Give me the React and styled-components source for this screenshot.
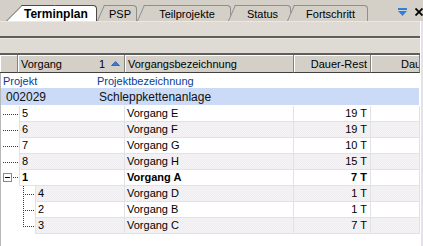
import React from "react";
import styled, { createGlobalStyle } from "styled-components";

const GlobalStyle = createGlobalStyle`
  html, body {
    margin: 0;
    padding: 0;
    background: #ffffff;
  }
  body {
    font-family: "Liberation Sans", Arial, sans-serif;
    font-size: 11px;
    color: #000;
  }
`;

const tabs = [
  { label: "Terminplan", active: true, ml: 16, slant: 16, w: 75 },
  { label: "PSP", ml: 7, slant: 7, w: 33 },
  { label: "Teilprojekte", ml: 7, slant: 7, w: 87 },
  { label: "Status", ml: 4, slant: 7, w: 56 },
  { label: "Fortschritt", ml: 3, slant: 7, w: 74 },
];

const rows = [
  { nr: "5", name: "Vorgang E", dur: "19 T", kind: "leaf" },
  { nr: "6", name: "Vorgang F", dur: "19 T", kind: "leaf" },
  { nr: "7", name: "Vorgang G", dur: "10 T", kind: "leaf" },
  { nr: "8", name: "Vorgang H", dur: "15 T", kind: "leaf" },
  { nr: "1", name: "Vorgang A", dur: "7 T", kind: "open", bold: true },
  { nr: "4", name: "Vorgang D", dur: "1 T", kind: "child" },
  { nr: "2", name: "Vorgang B", dur: "1 T", kind: "child" },
  { nr: "3", name: "Vorgang C", dur: "7 T", kind: "last" },
];

const Panel = styled.div`
  width: 423px;
  height: 246px;
  overflow: hidden;
  background: #d4d0c8;
  display: flex;
  flex-direction: column;
`;

const TabStrip = styled.div`
  height: 21px;
  flex-shrink: 0;
  display: flex;
  align-items: flex-end;
  padding-left: 6px;
`;

const Tab = styled.div`
  position: relative;
  z-index: ${(p) => (p.$active ? 20 : p.$z)};
  box-sizing: border-box;
  width: ${(p) => p.$w}px;
  height: 16px;
  margin-left: ${(p) => p.$ml}px;
  background: ${(p) => (p.$active ? "#ffffff" : "#d4d0c8")};
  border-top: 1px solid ${(p) => (p.$active ? "#4a4a4a" : "#8e8e8e")};
  border-right: 1px solid ${(p) => (p.$active ? "#4a4a4a" : "#8e8e8e")};
  border-top-right-radius: 4px;
  display: flex;
  align-items: center;
  justify-content: ${(p) => (p.$active ? "flex-start" : "center")};
  padding-left: ${(p) => (p.$active ? 2 : 0)}px;
  font-size: ${(p) => (p.$active ? 12 : 11)}px;
  font-weight: ${(p) => (p.$active ? "bold" : "normal")};
  white-space: nowrap;

  &::before {
    content: "";
    position: absolute;
    top: -1px;
    bottom: 0;
    left: -${(p) => p.$slant}px;
    width: ${(p) => p.$slant * 2}px;
    background: inherit;
    border-left: 1px solid ${(p) => (p.$active ? "#4a4a4a" : "#8e8e8e")};
    border-top: 1px solid ${(p) => (p.$active ? "#4a4a4a" : "#8e8e8e")};
    transform-origin: 0 100%;
    transform: skewX(-${(p) => (Math.atan(p.$slant / 16) * 180) / Math.PI}deg);
  }
`;

const TabLabel = styled.span`
  position: relative;
  z-index: 1;
`;

const StripTools = styled.div`
  margin-left: auto;
  align-self: stretch;
  display: flex;
  align-items: center;
  gap: 8px;
  padding-top: 3px;
`;

const Body = styled.div`
  flex: 1;
  display: flex;
  min-height: 0;
`;

const Main = styled.div`
  width: 420px;
  display: flex;
  flex-direction: column;
  background: #ffffff;
`;

const RightEdge = styled.div`
  width: 2px;
  border-left: 1px solid #ffffff;
  background: #e4e1ea;
`;

const ToolBar = styled.div`
  height: 17px;
  box-sizing: border-box;
  flex-shrink: 0;
  background: #dfdbd4;
  border-top: 1px solid #ebe8e2;
  border-bottom: 2px solid #5e5e5e;
`;

const HeaderRow = styled.div`
  display: grid;
  grid-template-columns: 18px 107px 169px 77px 49px;
  height: 18px;
  flex-shrink: 0;
`;

const HeadCell = styled.div`
  box-sizing: border-box;
  background: #d4d0c8;
  border-right: 1px solid #808080;
  border-bottom: 1px solid #404040;
  box-shadow: inset 1px 1px 0 #ffffff;
  display: flex;
  align-items: center;
  justify-content: ${(p) => p.$justify || "flex-start"};
  padding: 0 ${(p) => p.$pr || 3}px 0 ${(p) => p.$pl || 3}px;
  overflow: hidden;
  white-space: nowrap;
`;

const SortMark = styled.span`
  display: flex;
  align-items: center;
  gap: 6px;
`;

const Rows = styled.div`
  flex: 1;
  display: flex;
  flex-direction: column;
  border-left: 1px solid #b8b8b8;
`;

const GroupRow = styled.div`
  height: 15px;
  display: grid;
  grid-template-columns: 94px 1fr;
  align-items: center;
  padding-left: 2px;
  color: #0a3b94;
`;

const ProjectRow = styled.div`
  height: 17px;
  margin: 0 1px 1px 0;
  display: grid;
  grid-template-columns: 93px 1fr;
  align-items: center;
  padding-left: 5px;
  background: #cbdaf7;
  font-size: 12px;
  color: #111;
`;

const DataRow = styled.div`
  display: grid;
  grid-template-columns: ${(p) => p.$indent}px ${(p) => 124 - p.$indent}px 169px 77px 49px;
  height: 16px;
  font-weight: ${(p) => (p.$bold ? "bold" : "normal")};
`;

const TreeCell = styled.div`
  display: flex;
  background: #ffffff;
`;

const Cell = styled.div`
  box-sizing: border-box;
  border-right: 1px solid #e2e2e4;
  border-bottom: 1px solid #e2e2e4;
  border-left: ${(p) => (p.$first ? "1px solid #e2e2e4" : "none")};
  background: ${(p) =>
    p.$striped
      ? "repeating-conic-gradient(#f5f3f5 0 25%, #efedef 0 50%) 0 0 / 2px 2px"
      : "#ffffff"};
  display: flex;
  align-items: center;
  justify-content: ${(p) => (p.$right ? "flex-end" : "flex-start")};
  padding: 0 3px 0 2px;
  line-height: 15px;
  white-space: nowrap;
  overflow: hidden;
`;

const Dotted = ({ x1, y1, x2, y2 }) => (
  <line
    x1={x1}
    y1={y1}
    x2={x2}
    y2={y2}
    stroke="#3a3a3a"
    strokeWidth="1"
    strokeDasharray="1 1"
    shapeRendering="crispEdges"
  />
);

const TreeLines = ({ kind }) => {
  if (kind === "leaf") {
    return (
      <svg width="18" height="16">
        <Dotted x1={2} y1={8.5} x2={18} y2={8.5} />
      </svg>
    );
  }
  if (kind === "open") {
    return (
      <svg width="18" height="16">
        <rect x="2.5" y="3.5" width="8" height="8" fill="#fff" stroke="#8a8a8a" shapeRendering="crispEdges" />
        <line x1="4" y1="7.5" x2="9" y2="7.5" stroke="#000" shapeRendering="crispEdges" />
        <Dotted x1={12} y1={7.5} x2={18} y2={7.5} />
      </svg>
    );
  }
  return (
    <svg width="34" height="16">
      <Dotted x1={22.5} y1={0} x2={22.5} y2={kind === "last" ? 9 : 16} />
      <Dotted x1={24} y1={8.5} x2={34} y2={8.5} />
    </svg>
  );
};

const Filler = styled.div`
  flex: 1;
  background: #ffffff;
`;

export default function App() {
  return (
    <>
      <GlobalStyle />
      <Panel>
        <TabStrip>
          {tabs.map((t, i) => (
            <Tab
              key={t.label}
              $active={t.active}
              $z={i + 1}
              $w={t.w}
              $ml={t.ml}
              $slant={t.slant}
            >
              <TabLabel>{t.label}</TabLabel>
            </Tab>
          ))}
          <StripTools>
            <svg width="9" height="9" viewBox="0 0 9 9">
              <rect x="0" y="0" width="9" height="2" fill="#2f7fe0" />
              <polygon points="0,3 9,3 4.5,8" fill="#2f7fe0" />
            </svg>
            <svg width="8" height="8" viewBox="0 0 8 8">
              <path d="M0.5 0.5 L7.5 7.5 M7.5 0.5 L0.5 7.5" stroke="#000" strokeWidth="1.8" />
            </svg>
          </StripTools>
        </TabStrip>
        <Body>
          <Main>
            <ToolBar />
            <ToolBar />
            <HeaderRow>
              <HeadCell />
              <HeadCell $justify="space-between" $pr={4}>
                <span>Vorgang</span>
                <SortMark>
                  1
                  <svg width="9" height="5" viewBox="0 0 9 5">
                    <polygon points="0.5,4.5 8.5,4.5 4.5,0.5" fill="#3b7fd4" stroke="#2a5ea8" strokeWidth="0.8" />
                  </svg>
                </SortMark>
              </HeadCell>
              <HeadCell>Vorgangsbezeichnung</HeadCell>
              <HeadCell $justify="flex-end">Dauer-Rest</HeadCell>
              <HeadCell $pl={30}>Dauer</HeadCell>
            </HeaderRow>
            <Rows>
              <GroupRow>
                <span>Projekt</span>
                <span>Projektbezeichnung</span>
              </GroupRow>
              <ProjectRow>
                <span>002029</span>
                <span>Schleppkettenanlage</span>
              </ProjectRow>
              {rows.map((r, i) => {
                const indent = r.kind === "child" || r.kind === "last" ? 34 : 18;
                const striped = i % 2 === 1;
                return (
                  <DataRow key={r.nr} $indent={indent} $bold={r.bold}>
                    <TreeCell>
                      <TreeLines kind={r.kind} />
                    </TreeCell>
                    <Cell $first $striped={striped}>{r.nr}</Cell>
                    <Cell $striped={striped}>{r.name}</Cell>
                    <Cell $striped={striped} $right>{r.dur}</Cell>
                    <Cell $striped={striped} />
                  </DataRow>
                );
              })}
              <Filler />
            </Rows>
          </Main>
          <RightEdge />
        </Body>
      </Panel>
    </>
  );
}
